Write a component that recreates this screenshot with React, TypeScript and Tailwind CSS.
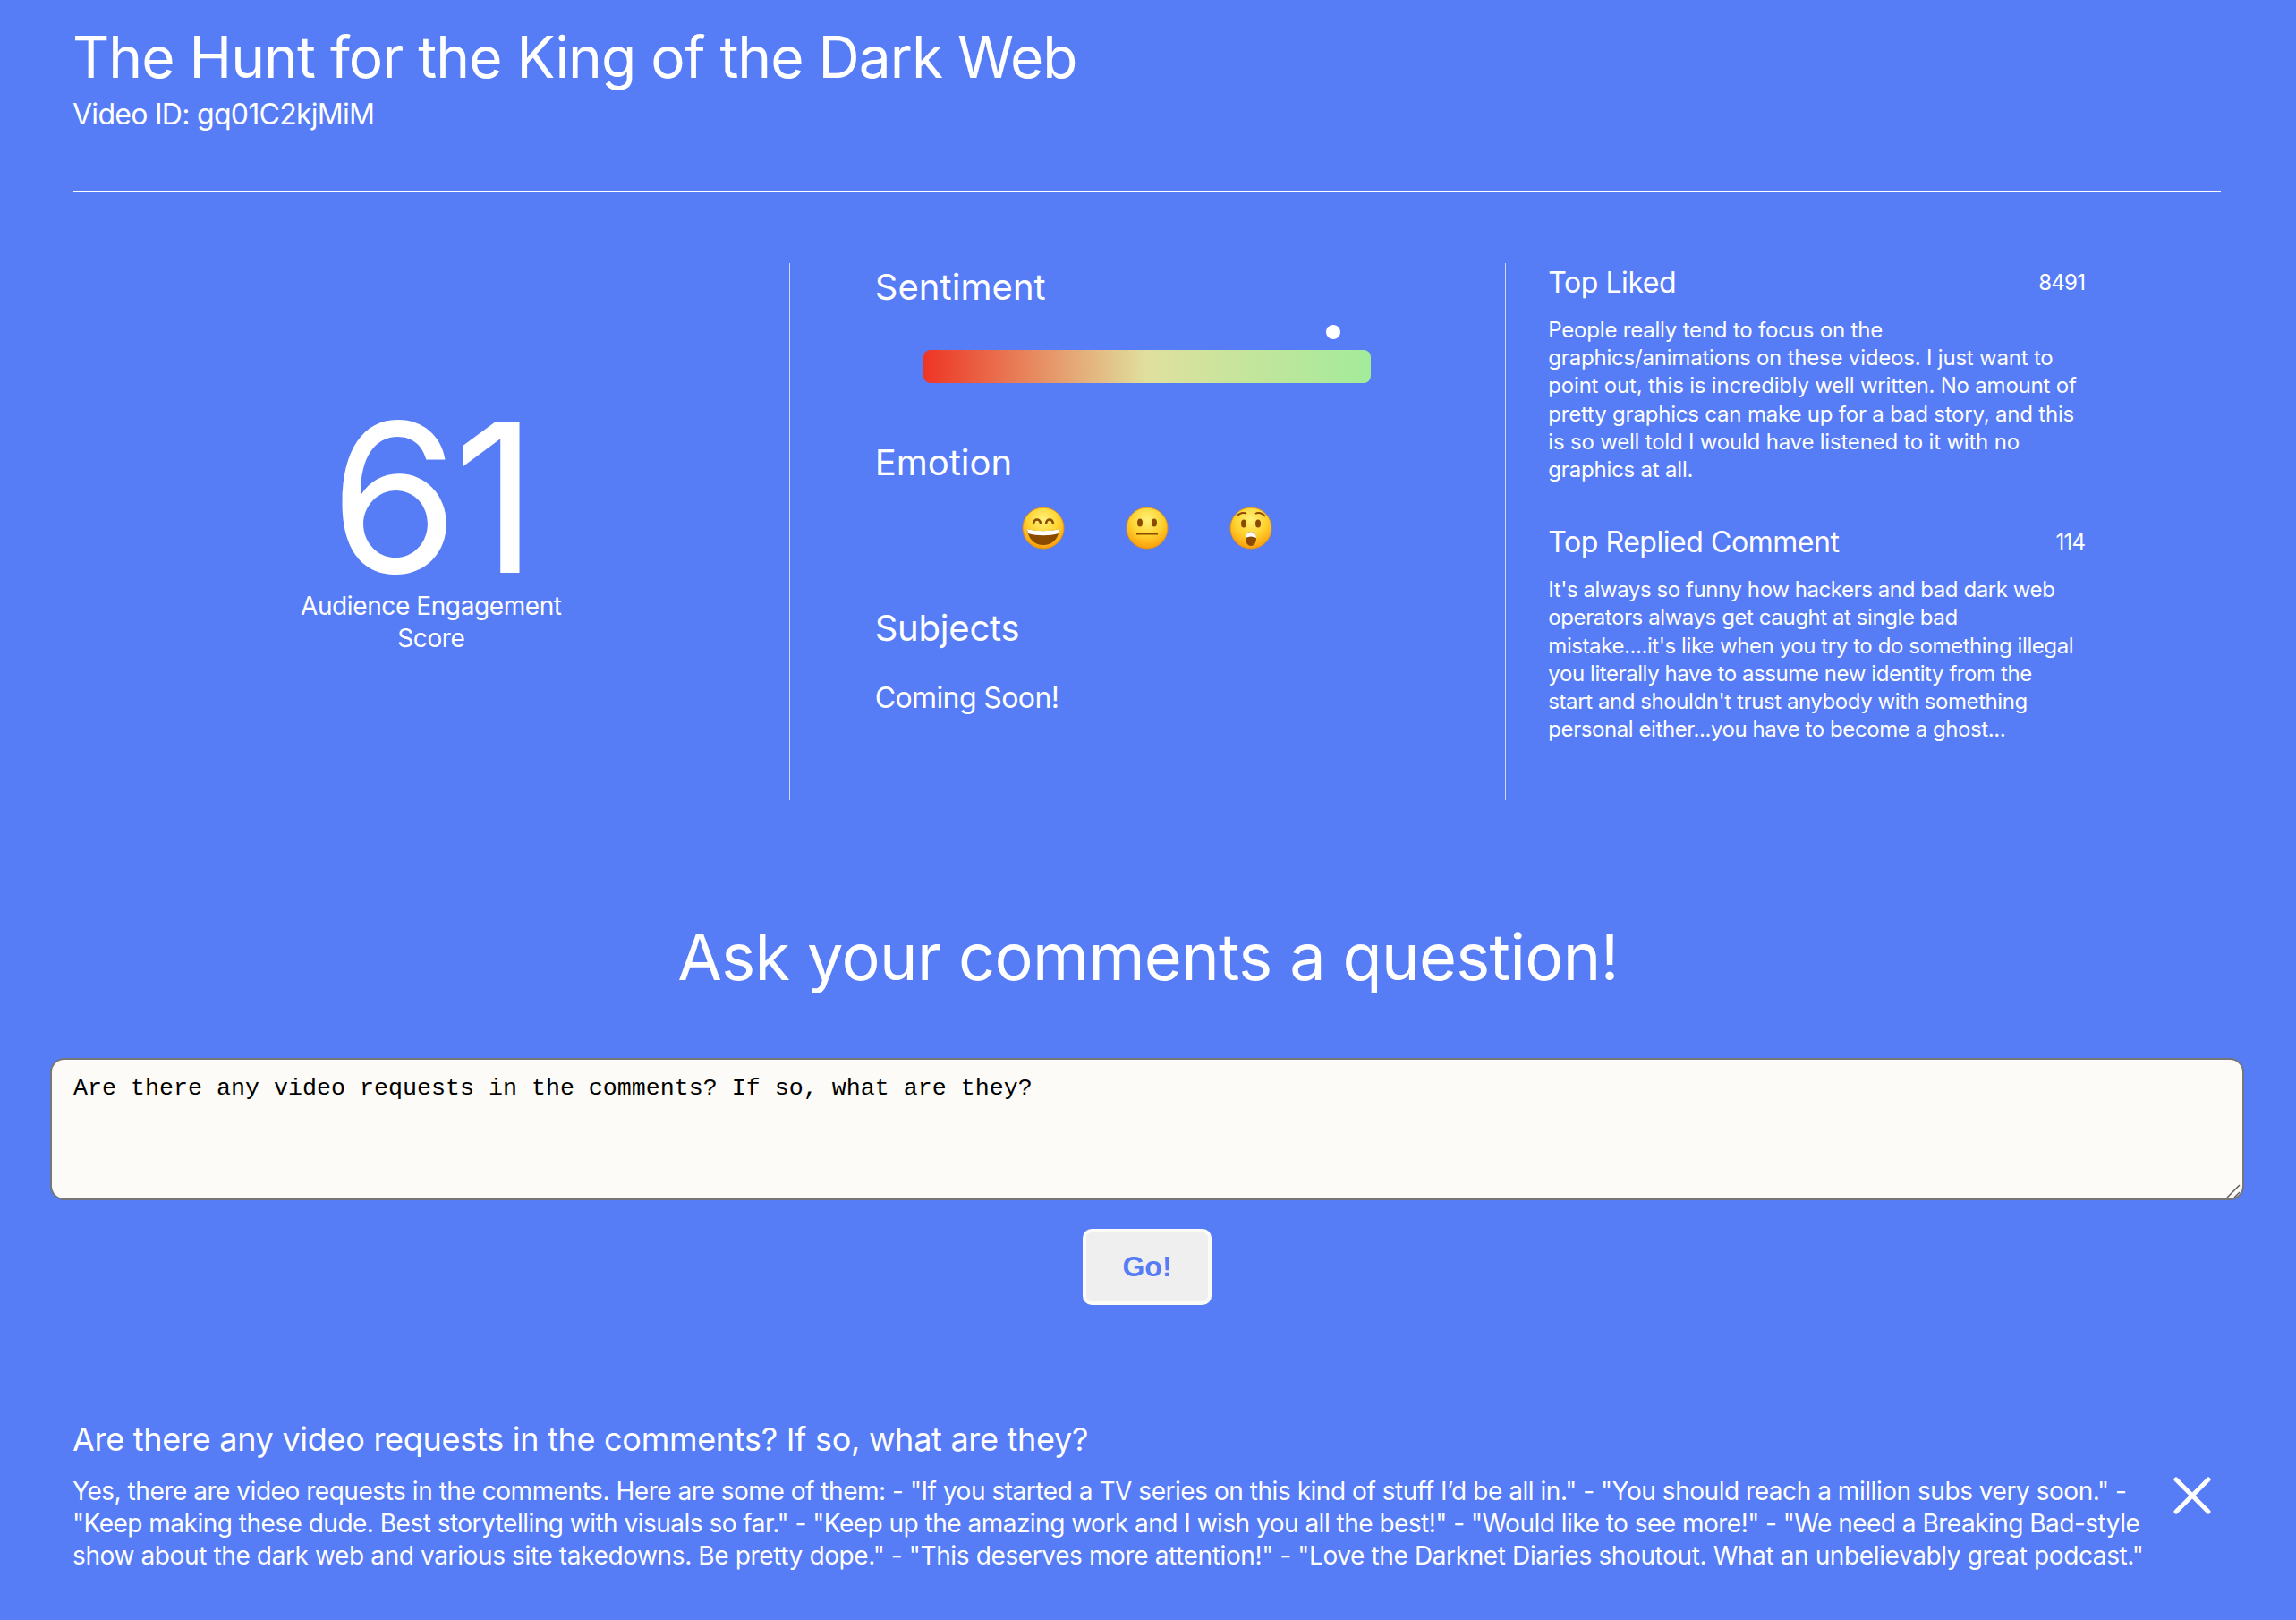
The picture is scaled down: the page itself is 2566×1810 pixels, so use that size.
const answerLines = [
  {
    text: `Yes, there are video requests in the comments. Here are some of them: - "If you started a TV series on this kind of stuff I’d be all in." - "You should reach a million subs very soon." -`,
    spacing: "tracking-[-0.46px]",
  },
  {
    text: `"Keep making these dude. Best storytelling with visuals so far." - "Keep up the amazing work and I wish you all the best!" - "Would like to see more!" - "We need a Breaking Bad-style`,
    spacing: "tracking-[-0.51px]",
  },
  {
    text: `show about the dark web and various site takedowns. Be pretty dope." - "This deserves more attention!" - "Love the Darknet Diaries shoutout. What an unbelievably great podcast."`,
    spacing: "tracking-[-0.38px]",
  },
];

const likedLines = [
  "People really tend to focus on the",
  "graphics/animations on these videos. I just want to",
  "point out, this is incredibly well written. No amount of",
  "pretty graphics can make up for a bad story, and this",
  "is so well told I would have listened to it with no",
  "graphics at all.",
];

const repliedLines = [
  "It's always so funny how hackers and bad dark web",
  "operators always get caught at single bad",
  "mistake....it's like when you try to do something illegal",
  "you literally have to assume new identity from the",
  "start and shouldn't trust anybody with something",
  "personal either...you have to become a ghost...",
];

const Face = ({ children }: { children: React.ReactNode }) => (
  <svg width="48" height="48" viewBox="0 0 48 48">
    <defs>
      <radialGradient id="face" cx="50%" cy="30%" r="70%">
        <stop offset="0%" stopColor="#fff27a" />
        <stop offset="55%" stopColor="#ffd22e" />
        <stop offset="100%" stopColor="#fb9d0c" />
      </radialGradient>
    </defs>
    <circle cx="24" cy="24" r="23" fill="url(#face)" stroke="#e8930c" strokeWidth="1" />
    {children}
  </svg>
);

const Comment = ({
  title,
  count,
  lines,
  spacing,
}: {
  title: string;
  count: string;
  lines: string[];
  spacing: string;
}) => (
  <div className="w-[600px]">
    <div className="flex items-center justify-between">
      <span className="text-[32px] leading-[40px] tracking-[-0.45px]">{title}</span>
      <span className="text-[24px] leading-[40px] tracking-[-0.7px]">{count}</span>
    </div>
    <div className={`mt-[17px] text-[24px] leading-[31.2px] ${spacing}`}>
      {lines.map((line) => (
        <div key={line} className="whitespace-nowrap">
          {line}
        </div>
      ))}
    </div>
  </div>
);

export default function App() {
  return (
    <div className="h-[1810px] overflow-hidden bg-[#567cf6] text-white font-['Inter',sans-serif]">
      <div className="px-[82px] pt-[24px]">
        <h1 className="-ml-px text-[64px] leading-[80px] font-normal tracking-[-0.97px]">
          The Hunt for the King of the Dark Web
        </h1>
        <p className="mt-[4px] -ml-px text-[32px] leading-[40px] tracking-[-0.72px]">Video ID: gq01C2kjMiM</p>
        <hr className="mt-[65px] mr-[2px] border-t-2 border-white" />
      </div>

      {/* Stats */}
      <div className="mx-[82px] mt-[79px] grid h-[600px] grid-cols-3">
        <div className="flex flex-col items-center justify-center border-r border-white/70 pb-[4px]">
          <div className="text-[232px] leading-[206px] font-normal tracking-[-6px]">61</div>
          <div className="w-[320px] text-center text-[28px] leading-[36px] tracking-[-0.4px]">
            Audience Engagement Score
          </div>
        </div>

        <div className="border-r border-white/70 pt-[2px] pl-[95px]">
          <h2 className="text-[40px] leading-[50px] tracking-[0.07px]">Sentiment</h2>
          <div className="relative mt-[45px] ml-[54px] h-[37px] w-[500px] rounded-lg bg-[linear-gradient(90deg,#ee3524,#e0e09e_50%,#a3eb9a)]">
            <div className="absolute top-[-28px] left-[450px] h-4 w-4 rounded-full bg-white" />
          </div>
          <h2 className="mt-[64px] text-[40px] leading-[50px]">Emotion</h2>
          <div className="mt-[24px] ml-[164px] flex gap-[68px]">
            <Face>
              <path d="M13 19c1-6 7-6 8 0M27 19c1-6 7-6 8 0" fill="none" stroke="#8a4a00" strokeWidth="2.5" />
              <path d="M6 25c10 3 26 3 36 0-1 12-9 18-18 18S7 37 6 25z" fill="#8a4a00" />
              <path d="M6 25c10 3 26 3 36 0l-1 5c-10 3-24 3-34 0z" fill="#fff" />
            </Face>
            <Face>
              <ellipse cx="16" cy="18" rx="3" ry="4.5" fill="#8a4a00" />
              <ellipse cx="32" cy="18" rx="3" ry="4.5" fill="#8a4a00" />
              <rect x="12" y="29" width="24" height="2.5" fill="#8a4a00" />
            </Face>
            <Face>
              <ellipse cx="16" cy="19" rx="3" ry="4.5" fill="#8a4a00" />
              <ellipse cx="32" cy="19" rx="3" ry="4.5" fill="#8a4a00" />
              <path d="M8 11c3-4 8-5 11-3M29 8c3-2 8-1 11 3" fill="none" stroke="#8a4a00" strokeWidth="2" />
              <ellipse cx="24" cy="36" rx="6" ry="8" fill="#8a4a00" />
              <path d="M18 35c0-9 12-9 12 0-4-2-8-2-12 0z" fill="#fff" />
            </Face>
          </div>
          <h2 className="mt-[63px] text-[40px] leading-[50px] tracking-[-0.2px]">Subjects</h2>
          <p className="mt-[33px] text-[32px] leading-[40px] tracking-[-0.6px]">Coming Soon!</p>
        </div>

        <div className="pt-[2px] pl-[47px]">
          <Comment title="Top Liked" count="8491" lines={likedLines} spacing="tracking-[-0.2px]" />
          <div className="h-[46px]" />
          <Comment title="Top Replied Comment" count="114" lines={repliedLines} spacing="tracking-[-0.42px]" />
        </div>
      </div>

      {/* Question */}
      <h2 className="mt-[130px] text-center text-[72px] leading-[90px] tracking-[-0.65px]">
        Ask your comments a question!
      </h2>
      <div className="relative mt-[68px] mr-[58px] ml-[56px]">
        <textarea
          readOnly
          value="Are there any video requests in the comments? If so, what are they?"
          className="block h-[159px] w-full resize-none rounded-2xl border-2 border-[#767676] bg-[#fcfbf7] px-[24px] pt-[15px] pb-[16px] font-['Liberation_Mono',monospace] text-[26.67px] leading-[34px] text-black"
        />
        <svg className="absolute right-[4px] bottom-[2px]" width="16" height="16" viewBox="0 0 16 16">
          <path d="M1 15L15 1M9 15l6-6" stroke="#5f5f5f" strokeWidth="1.5" fill="none" />
        </svg>
      </div>
      <div className="mt-[32px] flex justify-center">
        <button className="mr-[2px] h-[85px] w-[144px] rounded-[10px] border-4 border-[#fbfbf8] bg-[#efefef] pb-[2px] font-['Liberation_Sans',sans-serif] text-[32px] font-bold text-[#567cf6]">
          Go!
        </button>
      </div>

      {/* Answer */}
      <div className="mt-[126px] flex pr-[95px] pl-[82px]">
        <div className="w-[2340px]">
          <h3 className="-ml-px text-[36px] leading-[48px] tracking-[-0.28px]">
            Are there any video requests in the comments? If so, what are they?
          </h3>
          <div className="mt-[16px] -ml-px text-[28px] leading-[36px]">
            {answerLines.map((line) => (
              <div key={line.text} className={`whitespace-nowrap ${line.spacing}`}>
                {line.text}
              </div>
            ))}
          </div>
        </div>
        <svg className="mt-[66px] ml-[7px] shrink-0" width="42" height="42" viewBox="0 0 42 42">
          <path d="M3 3l36 36M39 3L3 39" stroke="#fff" strokeWidth="5" strokeLinecap="round" />
        </svg>
      </div>
    </div>
  );
}
